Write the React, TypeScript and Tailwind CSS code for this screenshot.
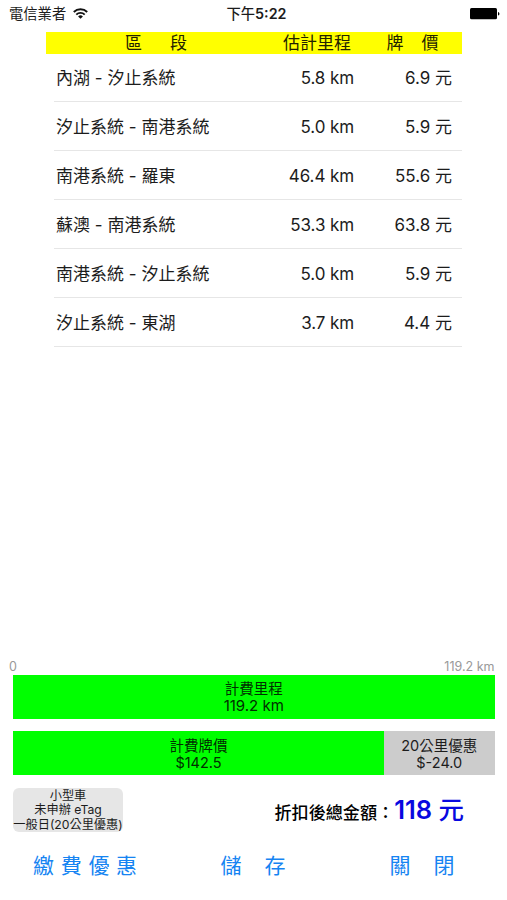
const segments = [
  { name: "內湖 - 汐止系統", distance: "5.8 km", price: "6.9 元" },
  { name: "汐止系統 - 南港系統", distance: "5.0 km", price: "5.9 元" },
  { name: "南港系統 - 羅東", distance: "46.4 km", price: "55.6 元" },
  { name: "蘇澳 - 南港系統", distance: "53.3 km", price: "63.8 元" },
  { name: "南港系統 - 汐止系統", distance: "5.0 km", price: "5.9 元" },
  { name: "汐止系統 - 東湖", distance: "3.7 km", price: "4.4 元" },
];

function WifiIcon() {
  return (
    <svg className="ml-[7px] h-[12px] w-[15px]" viewBox="0 0 15 12" fill="none" stroke="#111" strokeWidth="1.9">
      <path d="M0.8 4a9.6 9.6 0 0 1 13.4 0" />
      <path d="M3.3 6.6a6 6 0 0 1 8.4 0" />
      <path d="M7.5 10.8 5.1 8.4a3.4 3.4 0 0 1 4.8 0z" fill="#111" stroke="none" />
    </svg>
  );
}

function BatteryIcon() {
  return (
    <svg className="h-[12px] w-[30px]" viewBox="0 0 30 12" fill="#000">
      <rect x="0" y="0.1" width="27" height="11.2" rx="1.5" />
      <path d="M28 3.9c1.9.4 1.9 3.2 0 3.6z" />
    </svg>
  );
}

function StatusBar() {
  return (
    <header className="grid h-[31px] grid-cols-3 pr-[7px] pl-[9px] text-[14.3px] leading-[28px]">
      <div className="flex h-[27px] items-center">
        <span>電信業者</span>
        <WifiIcon />
      </div>
      <div className="pl-[4px] text-center font-semibold">
        <span className="font-medium">下午</span>5:22
      </div>
      <div className="flex h-[27px] items-center justify-end">
        <BatteryIcon />
      </div>
    </header>
  );
}

function SegmentTable() {
  return (
    <section className="mr-[45px] ml-[46px] text-[17px]">
      <div className="mt-px flex h-[22px] bg-[#ffff00] leading-[23px] text-[#222200]">
        <div className="flex w-[220px] gap-[28px] pl-[79px]">
          <span>區</span>
          <span>段</span>
        </div>
        <div className="w-[104px] pl-[17px]">估計里程</div>
        <div className="flex gap-[18px] pl-[16.5px]">
          <span>牌</span>
          <span>價</span>
        </div>
      </div>
      <ul className="-mt-px pl-[8px]">
        {segments.map((segment, index) => (
          <li key={index} className="flex h-[49px] border-b border-[#e6e6e6] pr-[10px] pl-[2px] leading-[50px]">
            <span className="flex-1">{segment.name}</span>
            <span className="w-[98px] text-right tracking-[-0.1px]">{segment.distance}</span>
            <span className="w-[98px] text-right">{segment.price}</span>
          </li>
        ))}
      </ul>
    </section>
  );
}

function Charges() {
  return (
    <section className="mr-[12.5px] ml-[13px] text-[14.5px] leading-[17px]">
      <div className="-ml-[4px] flex h-[17px] justify-between text-[12.5px] leading-[17px] text-[#999]">
        <span>0</span>
        <span>119.2 km</span>
      </div>
      <div className="flex h-[44px] flex-col items-center justify-center bg-[#00ff00] text-[#003000]">
        <span>計費里程</span>
        <span className="text-[15px]">119.2 km</span>
      </div>
      <div className="mt-[12px] flex h-[44px] text-center">
        <div className="flex flex-1 flex-col justify-center bg-[#00ff00] pt-px text-[#003000]">
          <span>計費牌價</span>
          <span>$142.5</span>
        </div>
        <div className="flex w-[110.5px] flex-col justify-center bg-[#cccccc] pt-px">
          <span>20公里優惠</span>
          <span>$-24.0</span>
        </div>
      </div>
    </section>
  );
}

function Summary() {
  return (
    <section className="mt-[13px] flex h-[44px] justify-between pr-[43px] pl-[13px]">
      <button className="flex w-[110px] flex-col items-center justify-center rounded-[6px] bg-[#e6e6e6] pt-px text-[12.2px] leading-[14.5px] whitespace-nowrap">
        <span>小型車</span>
        <span>未申辦 eTag</span>
        <span>一般日(20公里優惠)</span>
      </button>
      <p className="flex items-baseline leading-[44px] font-medium text-black">
        <span className="text-[17.1px]">折扣後總金額：</span>
        <span className="text-[25.5px] font-semibold text-[#0808e0]">
          118 <span className="font-medium">元</span>
        </span>
      </p>
    </section>
  );
}

function Actions() {
  return (
    <nav className="mt-[12px] flex h-[44px] text-[21px] leading-[44px] text-[#1684f2]">
      <button className="flex w-[220.5px] gap-[6.7px] pl-[33px]">
        <span>繳</span>
        <span>費</span>
        <span>優</span>
        <span>惠</span>
      </button>
      <button className="flex w-[169px] gap-[23px]">
        <span>儲</span>
        <span>存</span>
      </button>
      <button className="flex gap-[23px]">
        <span>關</span>
        <span>閉</span>
      </button>
    </nav>
  );
}

export default function App() {
  return (
    <main className="flex h-[900px] w-[507px] flex-col overflow-hidden bg-white pb-[12px] font-['Inter','Noto_Sans_CJK_TC',sans-serif] text-[#1c1c1c]">
      <StatusBar />
      <SegmentTable />
      <div className="flex-1" />
      <Charges />
      <Summary />
      <Actions />
    </main>
  );
}
